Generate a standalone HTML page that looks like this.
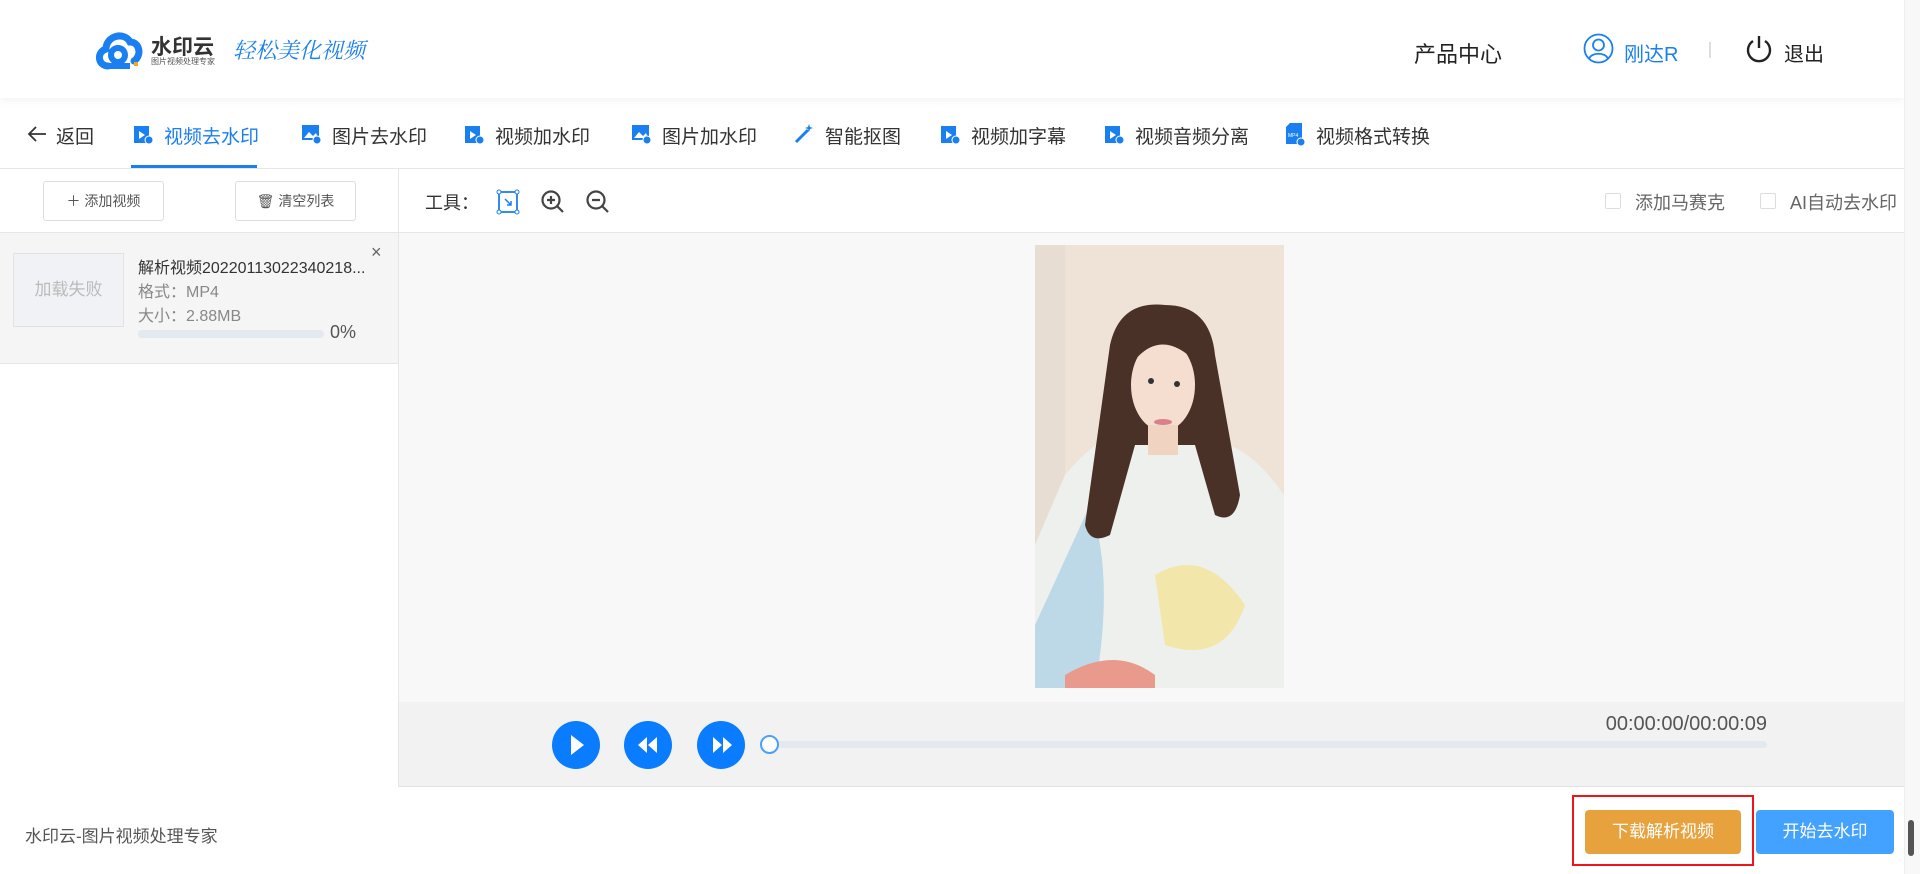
<!DOCTYPE html>
<html><head><meta charset="utf-8"><style>
*{margin:0;padding:0;box-sizing:border-box}
body{width:1920px;height:874px;overflow:hidden;background:#fff;font-family:"Liberation Sans","Noto Sans CJK SC",sans-serif;position:relative;color:#333}
.a{position:absolute;white-space:nowrap}
.nav{font-size:19px;color:#333;top:122px}
.nav svg{position:absolute;left:-32px;top:0}
</style></head><body>
<!-- header -->
<div class="a" style="left:0;top:0;width:1904px;height:98px;background:#fff;box-shadow:0 2px 8px rgba(0,0,0,0.06)"></div>
<svg class="a" style="left:94px;top:28px" width="50" height="44" viewBox="0 0 50 44"><path d="M14 38 C4 38 2 24 12 21 C12 8 30 3 36 14 C46 14 48 28 40 33" fill="none" stroke="#1a7ff0" stroke-width="7" stroke-linecap="round"/><circle cx="24" cy="27" r="7" fill="none" stroke="#1a7ff0" stroke-width="6"/><path d="M14 38 H36" stroke="#1a7ff0" stroke-width="6"/><rect x="40" y="34" width="4" height="4" fill="#f5a623"/></svg>
<div class="a" style="left:151px;top:31px;font-size:21px;font-weight:bold;color:#333">水印云</div>
<div class="a" style="left:151px;top:56px;font-size:8px;color:#555">图片视频处理专家</div>
<div class="a" style="left:233px;top:34px;font-size:22px;color:#1a7ff0;font-style:italic;font-family:'Noto Serif CJK SC',serif">轻松美化视频</div>
<div class="a" style="left:1414px;top:37px;font-size:22px;color:#222">产品中心</div>
<svg class="a" style="left:1583px;top:33px" width="31" height="31" viewBox="0 0 31 31"><circle cx="15.5" cy="15.5" r="14" fill="none" stroke="#1a7ff0" stroke-width="1.8"/><circle cx="15.5" cy="12" r="5.5" fill="none" stroke="#1a7ff0" stroke-width="1.8"/><path d="M6 26 C8 19 23 19 25 26" fill="none" stroke="#1a7ff0" stroke-width="1.8"/></svg>
<div class="a" style="left:1624px;top:38px;font-size:20px;color:#1a7ff0">刚达R</div>
<div class="a" style="left:1709px;top:42px;width:2px;height:16px;background:#ddd"></div>
<svg class="a" style="left:1745px;top:34px" width="28" height="30" viewBox="0 0 28 30"><path d="M8 7 A11 11 0 1 0 20 7" fill="none" stroke="#222" stroke-width="2.4"/><path d="M14 2 V14" stroke="#222" stroke-width="2.4"/></svg>
<div class="a" style="left:1784px;top:38px;font-size:20px;color:#222">退出</div>
<!-- nav -->
<div class="a" style="left:0;top:168px;width:1904px;height:1px;background:#e6e6e6"></div>
<svg class="a" style="left:27px;top:125px" width="20" height="18" viewBox="0 0 20 18"><path d="M9 2 L2 9 L9 16 M2 9 H19" fill="none" stroke="#333" stroke-width="1.8"/></svg>
<div class="a nav" style="left:56px">返回</div>
<div class="a" style="left:131px;top:165px;width:126px;height:3px;background:#1a7ff0"></div>
<div class="a nav" style="left:164px;color:#1a7ff0"><svg width="22" height="22"><rect x="2" y="4" width="15" height="17" fill="#1a7ff0"/><path d="M7 9 L13 13 L7 17Z" fill="#fff"/><circle cx="17" cy="18" r="4" fill="#1a7ff0" stroke="#fff"/></svg>视频去水印</div>
<div class="a nav" style="left:332px"><svg width="22" height="22"><rect x="2" y="3" width="17" height="15" fill="#1a7ff0"/><path d="M4 16 L9 10 L13 14 L16 11 L18 16Z" fill="#fff"/><circle cx="17" cy="18" r="4" fill="#1a7ff0" stroke="#fff"/></svg>图片去水印</div>
<div class="a nav" style="left:495px"><svg width="22" height="22"><rect x="2" y="4" width="15" height="17" fill="#1a7ff0"/><path d="M7 9 L13 13 L7 17Z" fill="#fff"/><circle cx="17" cy="18" r="4" fill="#1a7ff0" stroke="#fff"/></svg>视频加水印</div>
<div class="a nav" style="left:662px"><svg width="22" height="22"><rect x="2" y="3" width="17" height="15" fill="#1a7ff0"/><path d="M4 16 L9 10 L13 14 L16 11 L18 16Z" fill="#fff"/><circle cx="17" cy="18" r="4" fill="#1a7ff0" stroke="#fff"/></svg>图片加水印</div>
<div class="a nav" style="left:825px"><svg width="22" height="22"><path d="M3 20 L15 8" stroke="#1a7ff0" stroke-width="3"/><path d="M16 2 L17 5 L20 6 L17 7 L16 10 L15 7 L12 6 L15 5Z" fill="#1a7ff0"/></svg>智能抠图</div>
<div class="a nav" style="left:971px"><svg width="22" height="22"><rect x="2" y="4" width="15" height="17" fill="#1a7ff0"/><path d="M7 9 L13 13 L7 17Z" fill="#fff"/><circle cx="17" cy="18" r="4" fill="#1a7ff0" stroke="#fff"/></svg>视频加字幕</div>
<div class="a nav" style="left:1135px"><svg width="22" height="22"><rect x="2" y="4" width="15" height="17" fill="#1a7ff0"/><path d="M7 9 L13 13 L7 17Z" fill="#fff"/><circle cx="17" cy="18" r="4" fill="#1a7ff0" stroke="#fff"/></svg>视频音频分离</div>
<div class="a nav" style="left:1316px"><svg width="22" height="24"><path d="M6 1 H18 V22 H2 V5Z" fill="#1a7ff0"/><text x="4" y="15" font-size="5" fill="#fff" font-family="Liberation Sans">MP4</text><circle cx="17" cy="20" r="4" fill="#1a7ff0" stroke="#fff"/></svg>视频格式转换</div>
<!-- left panel -->
<div class="a" style="left:398px;top:169px;width:1px;height:618px;background:#e6e6e6"></div>
<div class="a" style="left:43px;top:181px;width:121px;height:40px;border:1px solid #ddd;border-radius:3px;font-size:14px;color:#555;text-align:center;line-height:38px">＋ 添加视频</div>
<div class="a" style="left:235px;top:181px;width:121px;height:40px;border:1px solid #ddd;border-radius:3px;font-size:14px;color:#555;text-align:center;line-height:38px">🗑 清空列表</div>
<div class="a" style="left:0;top:232px;width:398px;height:1px;background:#e6e6e6"></div>
<div class="a" style="left:0;top:233px;width:398px;height:131px;background:#f5f5f5;border-bottom:1px solid #e6e6e6"></div>
<div class="a" style="left:13px;top:253px;width:111px;height:74px;background:#f0f2f5;border:1px solid #e2e2e2;color:#bbb;font-size:17px;text-align:center;line-height:72px">加载失败</div>
<div class="a" style="left:138px;top:254px;font-size:16px;color:#333">解析视频20220113022340218...</div>
<div class="a" style="left:371px;top:242px;font-size:18px;color:#666">×</div>
<div class="a" style="left:138px;top:278px;font-size:16px;color:#888">格式：MP4</div>
<div class="a" style="left:138px;top:302px;font-size:16px;color:#888">大小：2.88MB</div>
<div class="a" style="left:138px;top:330px;width:186px;height:8px;background:#e4e8ef;border-radius:4px"></div>
<div class="a" style="left:330px;top:322px;font-size:18px;color:#555">0%</div>
<!-- toolbar -->
<div class="a" style="left:399px;top:232px;width:1505px;height:1px;background:#e6e6e6"></div>
<div class="a" style="left:425px;top:189px;font-size:18px;color:#333">工具：</div>
<svg class="a" style="left:496px;top:189px" width="24" height="26" viewBox="0 0 24 26"><rect x="3" y="3" width="18" height="20" fill="none" stroke="#1a7ff0" stroke-width="1.8"/><circle cx="3" cy="3" r="2" fill="#fff" stroke="#1a7ff0"/><circle cx="21" cy="3" r="2" fill="#fff" stroke="#1a7ff0"/><circle cx="3" cy="23" r="2" fill="#fff" stroke="#1a7ff0"/><circle cx="21" cy="23" r="2" fill="#fff" stroke="#1a7ff0"/><path d="M9 10 L15 16 M15 12 V16 H11" fill="none" stroke="#1a7ff0" stroke-width="1.5"/></svg>
<svg class="a" style="left:540px;top:189px" width="26" height="26" viewBox="0 0 26 26"><circle cx="11" cy="11" r="8.5" fill="none" stroke="#444" stroke-width="2.2"/><path d="M17 17 L23 23 M7 11 H15 M11 7 V15" stroke="#444" stroke-width="2.2"/></svg>
<svg class="a" style="left:585px;top:189px" width="26" height="26" viewBox="0 0 26 26"><circle cx="11" cy="11" r="8.5" fill="none" stroke="#444" stroke-width="2.2"/><path d="M17 17 L23 23 M7 11 H15" stroke="#444" stroke-width="2.2"/></svg>
<div class="a" style="left:1605px;top:193px;width:16px;height:16px;border:1px solid #ddd;border-radius:2px"></div>
<div class="a" style="left:1635px;top:189px;font-size:18px;color:#666">添加马赛克</div>
<div class="a" style="left:1760px;top:193px;width:16px;height:16px;border:1px solid #ddd;border-radius:2px"></div>
<div class="a" style="left:1790px;top:189px;font-size:18px;color:#666">AI自动去水印</div>
<!-- video area -->
<div class="a" style="left:399px;top:233px;width:1505px;height:469px;background:#f8f8f8"></div>
<svg class="a" style="left:1035px;top:245px" width="249" height="443" viewBox="0 0 249 443">
<rect width="249" height="443" fill="#efe2d6"/><rect x="0" width="30" height="443" fill="#e8ddd3"/>
<path d="M30 230 Q80 170 110 200 L150 200 Q200 180 249 250 V443 H0 V300Z" fill="#eef0ee"/>
<path d="M55 260 Q80 330 60 443 H0 V380Z" fill="#9cc9e2" opacity=".6"/>
<path d="M120 330 Q170 300 210 360 Q190 420 130 400Z" fill="#f3e39a" opacity=".8"/>
<path d="M30 430 Q80 400 120 430 V443 H30Z" fill="#e99a8c"/>
<path d="M75 100 Q85 55 130 60 Q175 60 180 110 L205 250 Q200 280 180 270 L160 200 L100 200 L75 290 Q55 300 50 280 Z" fill="#4a3128"/>
<ellipse cx="128" cy="140" rx="32" ry="46" fill="#f5ddd0"/>
<path d="M96 120 Q125 80 162 118 Q150 95 128 92 Q100 95 96 120Z" fill="#4a3128"/>
<rect x="113" y="180" width="30" height="30" fill="#f1d3c2"/>
<ellipse cx="128" cy="177" rx="9" ry="3" fill="#d9808a"/>
<circle cx="116" cy="136" r="3" fill="#333"/><circle cx="142" cy="139" r="3" fill="#333"/>
</svg>
<!-- controls -->
<div class="a" style="left:399px;top:702px;width:1505px;height:85px;background:#f2f2f2;border-bottom:1px solid #e2e2e2"></div>
<svg class="a" style="left:551px;top:720px" width="200" height="50" viewBox="0 0 200 50"><circle cx="25" cy="25" r="24" fill="#0a7cff"/><path d="M20 15 L33 25 L20 35Z" fill="#fff"/><circle cx="97" cy="25" r="24" fill="#0a7cff"/><path d="M96 17 L87 25 L96 33Z M106 17 L97 25 L106 33Z" fill="#fff"/><circle cx="170" cy="25" r="24" fill="#0a7cff"/><path d="M162 17 L171 25 L162 33Z M172 17 L181 25 L172 33Z" fill="#fff"/></svg>
<div class="a" style="left:769px;top:741px;width:998px;height:7px;background:#e4e8ef;border-radius:4px"></div>
<div class="a" style="left:760px;top:735px;width:19px;height:19px;border:2px solid #4aa0ff;border-radius:50%;background:#fff"></div>
<div class="a" style="left:1580px;top:713px;width:187px;text-align:right;font-size:20px;color:#555">00:00:00/00:00:09</div>
<!-- footer -->
<div class="a" style="left:25px;top:822px;font-size:17px;color:#555">水印云-图片视频处理专家</div>
<div class="a" style="left:1572px;top:795px;width:182px;height:71px;border:2px solid #f0141a"></div>
<div class="a" style="left:1585px;top:810px;width:156px;height:44px;background:#e8a23d;border-radius:4px;color:#fff;font-size:17px;text-align:center;line-height:44px">下载解析视频</div>
<div class="a" style="left:1756px;top:810px;width:138px;height:44px;background:#43a2ff;border-radius:4px;color:#fff;font-size:17px;text-align:center;line-height:44px">开始去水印</div>
<!-- scrollbar -->
<div class="a" style="left:1904px;top:0;width:16px;height:874px;background:#f8f8f8;border-left:1px solid #eee"></div>
<div class="a" style="left:1908px;top:820px;width:6px;height:36px;background:#555;border-radius:3px"></div>
</body></html>
